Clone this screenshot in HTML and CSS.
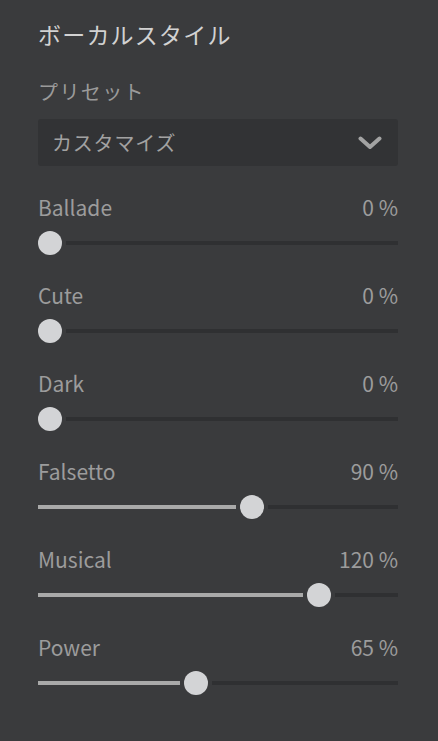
FILE: index.html
```html
<!DOCTYPE html>
<html lang="ja">
<head>
<meta charset="utf-8">
<link rel="stylesheet" href="styles.css">
</head>
<body>
<div class="panel">
  <h1 class="title">ボーカルスタイル</h1>
  <div class="preset-label">プリセット</div>
  <div class="dropdown">
    <span class="dropdown-text">カスタマイズ</span>
    <svg class="chevron" width="24" height="14" viewBox="0 0 24 14"><polyline points="2.5,2.5 12,11 21.5,2.5" fill="none" stroke="#a3a3a3" stroke-width="4" stroke-linecap="round" stroke-linejoin="round"/></svg>
  </div>
  <div class="sliders">
    <div class="row">
      <div class="row-head"><span>Ballade</span><span>0 %</span></div>
      <div class="slider"><div class="thumb"></div><div class="rest"></div></div>
    </div>
    <div class="row">
      <div class="row-head"><span>Cute</span><span>0 %</span></div>
      <div class="slider"><div class="thumb"></div><div class="rest"></div></div>
    </div>
    <div class="row">
      <div class="row-head"><span>Dark</span><span>0 %</span></div>
      <div class="slider"><div class="thumb"></div><div class="rest"></div></div>
    </div>
    <div class="row">
      <div class="row-head"><span>Falsetto</span><span>90 %</span></div>
      <div class="slider"><div class="fill" style="width:197.6px"></div><div class="thumb"></div><div class="rest"></div></div>
    </div>
    <div class="row">
      <div class="row-head"><span>Musical</span><span>120 %</span></div>
      <div class="slider"><div class="fill" style="width:264.8px"></div><div class="thumb"></div><div class="rest"></div></div>
    </div>
    <div class="row">
      <div class="row-head"><span>Power</span><span>65 %</span></div>
      <div class="slider"><div class="fill" style="width:141.6px"></div><div class="thumb"></div><div class="rest"></div></div>
    </div>
  </div>
</div>
</body>
</html>
```
FILE: styles.css
```css
html, body {
  margin: 0;
  padding: 0;
  background: #3a3b3d;
  height: 100%;
}
body {
  font-family: "Noto Sans CJK JP", sans-serif;
  color: #9c9c9c;
}
.panel {
  padding: 18px 40px 0 38px;
  display: flex;
  flex-direction: column;
}
.title {
  margin: 0;
  font-weight: 400;
  font-size: 23px;
  letter-spacing: 1.2px;
  line-height: 32px;
  color: #d2d2d2;
}
.preset-label {
  margin-top: 28px;
  font-size: 20px;
  letter-spacing: 1.4px;
  line-height: 28px;
  color: #9a9a9a;
}
.dropdown {
  margin-top: 13px;
  height: 47px;
  background: #323335;
  border-radius: 3px;
  display: flex;
  align-items: center;
  justify-content: space-between;
  padding: 0 16px 0 14px;
}
.dropdown-text {
  font-size: 20px;
  letter-spacing: 0.8px;
  color: #a2a2a2;
}
.chevron {
  display: block;
}
.sliders {
  margin-top: 28px;
  display: flex;
  flex-direction: column;
  gap: 16px;
}
.row-head {
  display: flex;
  justify-content: space-between;
  font-size: 21px;
  line-height: 26px;
  color: #9c9c9c;
}
.slider {
  height: 46px;
  display: flex;
  align-items: center;
}
.fill {
  height: 4px;
  background: #a9a9a9;
  margin-right: 4px;
}
.thumb {
  width: 24px;
  height: 24px;
  border-radius: 50%;
  background: #d3d4d6;
  flex: none;
}
.rest {
  flex: 1;
  height: 4px;
  background: #2f3032;
  margin-left: 4px;
}
```
